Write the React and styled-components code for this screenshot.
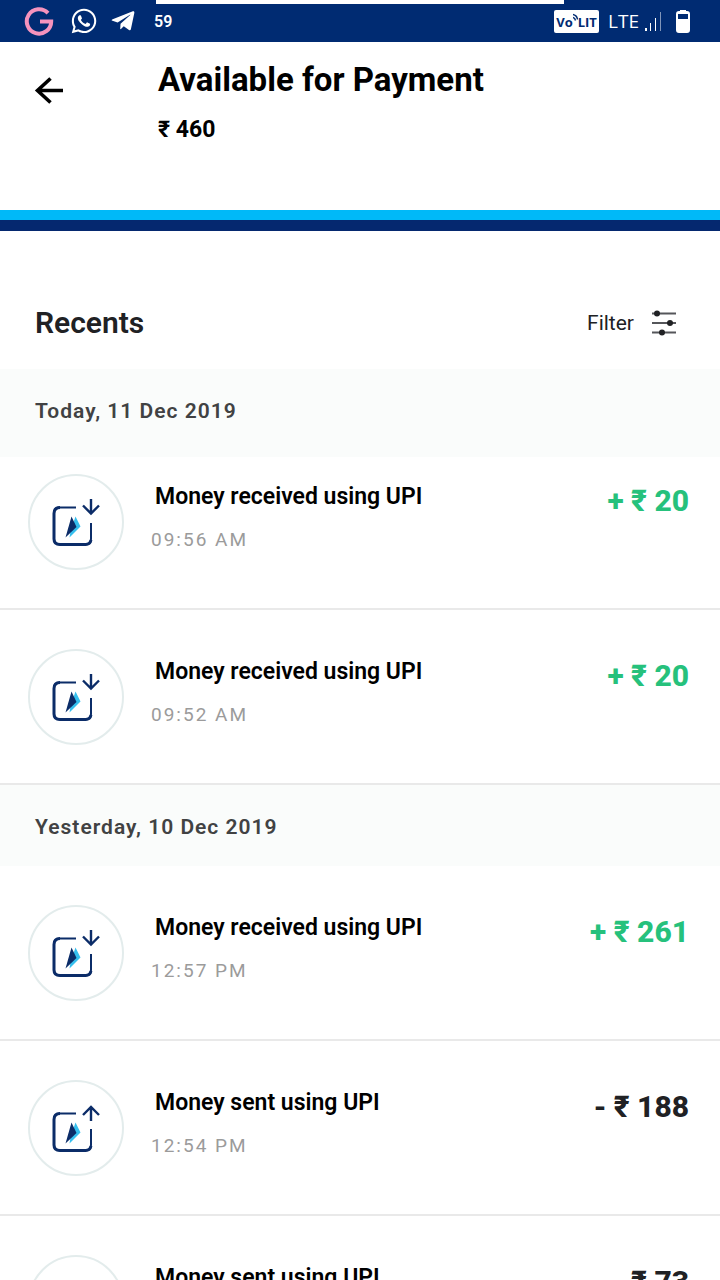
import React from 'react';
import styled, { createGlobalStyle } from 'styled-components';
import { FaWhatsapp, FaTelegramPlane } from 'react-icons/fa';

const GlobalStyle = createGlobalStyle`
  * {
    box-sizing: border-box;
  }
  body {
    margin: 0;
    background: #ffffff;
    font-family: Roboto, "Noto Sans", sans-serif;
    color: #202124;
  }
  h1, h2, h3, p, ul {
    margin: 0;
    padding: 0;
  }
`;

const Screen = styled.div`
  position: relative;
  height: 100vh;
  overflow: hidden;
`;

const StatusBar = styled.div`
  display: flex;
  align-items: center;
  justify-content: space-between;
  height: 42px;
  padding: 0 30px 0 24px;
  background: #002b72;
  color: #ffffff;
`;

const TopStrip = styled.div`
  position: absolute;
  top: 0;
  left: 156px;
  right: 156px;
  height: 4px;
  background: #ffffff;
`;

const StatusGroup = styled.div`
  display: flex;
  align-items: center;
  gap: ${(props) => props.$gap}px;
`;

const Count = styled.span`
  margin-left: 6px;
  font-size: 16px;
  font-weight: 600;
`;

const VolteBadge = styled.span`
  display: flex;
  justify-content: center;
  width: 45px;
  height: 23px;
  margin-right: 4px;
  border-radius: 2px;
  background: #ffffff;
  color: #002b72;
  font: 700 13px/24px "Open Sans", sans-serif;
`;

const Network = styled.span`
  font: 400 19px/24px "Open Sans", sans-serif;
`;

const Header = styled.header`
  display: flex;
  height: 168px;
  padding: 16px 32px;
`;

const BackButton = styled.button`
  display: flex;
  width: 126px;
  height: 64px;
  padding: 16px 0 0;
  border: none;
  background: transparent;
  cursor: pointer;
`;

const Title = styled.h1`
  color: #000000;
  font-size: 33px;
  font-weight: 700;
  line-height: 44px;
`;

const Balance = styled.p`
  margin-top: 14px;
  color: #000000;
  font-size: 23px;
  font-weight: 700;
  line-height: 28px;
`;

const Stripe = styled.div`
  height: 21px;
  border-top: 10px solid #00b9f8;
  background: #05286f;
`;

const RecentsBar = styled.div`
  display: flex;
  align-items: center;
  justify-content: space-between;
  height: 138px;
  padding: 45px 43px 0 35px;
`;

const RecentsTitle = styled.h2`
  font-size: 30px;
  font-weight: 600;
`;

const FilterButton = styled.button`
  display: flex;
  align-items: center;
  gap: 17px;
  padding: 0;
  border: none;
  background: transparent;
  color: #202124;
  font-family: inherit;
  font-size: 21px;
  cursor: pointer;
`;

const DateBand = styled.h3`
  height: ${(props) => (props.$tall ? 88 : 81)}px;
  padding-left: 35px;
  background: #fafcfb;
  color: #414243;
  font-size: 21px;
  font-weight: 600;
  letter-spacing: 1px;
  line-height: 84px;
`;

const List = styled.ul`
  list-style: none;
`;

const Row = styled.li`
  display: flex;
  height: ${(props) => (props.$compact ? 153 : 175)}px;
  padding: ${(props) => (props.$compact ? 17 : 39)}px 31px 0 28px;
  border-bottom: 2px solid #e9e9e9;
`;

const IconCircle = styled.div`
  display: flex;
  flex: none;
  width: 96px;
  height: 96px;
  border: 2px solid #e3ecec;
  border-radius: 50%;
`;

const Details = styled.div`
  flex: 1;
  padding: 9px 0 0 27px;
`;

const Name = styled.p`
  padding-left: 4px;
  color: #000000;
  font-size: 23px;
  font-weight: 600;
  line-height: 28px;
`;

const Time = styled.p`
  margin-top: 15px;
  color: #9b9b9b;
  font-size: 19px;
  letter-spacing: 2px;
  line-height: 28px;
`;

const Amount = styled.span`
  padding-top: 9px;
  color: ${(props) => (props.$sent ? '#202124' : '#26c17c')};
  font-size: 30px;
  font-weight: 800;
  line-height: 36px;
  white-space: nowrap;
`;

function GoogleIcon() {
  return (
    <svg width="34" height="30" viewBox="0 0 34 30" fill="none" stroke="#f593bd" strokeWidth="4">
      <path d="M24 7.200A12.200 12.200 0 1 0 27.200 15.500H16" />
    </svg>
  );
}

function CallWaves() {
  return (
    <svg width="5" height="14" viewBox="0 0 5 14" fill="none" stroke="#002b72" strokeWidth="1.500">
      <path d="M0 7.500Q2 8 2.500 10.500M0 4.500Q4 5.500 4.500 9.500" />
    </svg>
  );
}

function SignalIcon() {
  return (
    <svg width="18" height="20" viewBox="0 0 18 20" fill="#ffffff">
      <path d="M1 17h2v3H1zM6 12h1v8H6zM11 7h1v13h-1z" />
      <path d="M16 1h1v19h-1z" opacity="0.5" />
    </svg>
  );
}

function BatteryIcon() {
  return (
    <svg width="14" height="24" viewBox="0 0 14 24">
      <path
        d="M4 1h6v1h1q3 0 3 3v16q0 3-3 3H3q-3 0-3-3V5q0-3 3-3h1zM2 5v5h10V5z"
        fill="#ffffff"
        fillRule="evenodd"
      />
    </svg>
  );
}

function BackIcon() {
  return (
    <svg width="34" height="32" viewBox="0 0 34 32" fill="none" stroke="#000000" strokeWidth="3.600">
      <path d="M31 16.500H5M18.500 4.500L5.500 16.500L18.500 28.500" />
    </svg>
  );
}

function FilterIcon() {
  return (
    <svg width="26" height="26" viewBox="0 0 26 26">
      <path d="M1 3.500h24M1 13h24M1 22.500h24" stroke="#55565a" strokeWidth="2" />
      <circle cx="6" cy="3.500" r="3" fill="#202124" />
      <circle cx="19" cy="13" r="3" fill="#202124" />
      <circle cx="11" cy="22.500" r="3" fill="#202124" />
    </svg>
  );
}

function TransferIcon({ sent }) {
  return (
    <svg width="92" height="92" viewBox="2 2 92 92" fill="none" stroke="#0b2c68">
      <path d="M48 33.500H32Q26.500 33.500 26 39V65Q26.500 70.500 32 70.500H57.500Q63 70.500 63 65V49" strokeWidth="2" />
      <path d="M32 33.500Q26 33.500 26 39.500V65Q26 70.500 32 70.500H57.500Q62 70.500 63 66" strokeWidth="3" />
      <path d="M47.500 42.500L52.500 52.500L41.500 63.500L42.500 57Z" fill="#35bfee" stroke="none" />
      <path d="M43.500 42.500L48.500 53L37.500 63.500Z" fill="#0b2c68" stroke="none" />
      <path
        d={sent ? 'M63 41V27M55 35L63 27L71 35' : 'M63 25V39M55 31.500L63 39.500L71 31.500'}
        strokeWidth="2.400"
      />
    </svg>
  );
}

const days = [
  {
    label: 'Today, 11 Dec 2019',
    items: [
      { time: '09:56 AM', amount: '₹ 20' },
      { time: '09:52 AM', amount: '₹ 20' },
    ],
  },
  {
    label: 'Yesterday, 10 Dec 2019',
    items: [
      { time: '12:57 PM', amount: '₹ 261' },
      { time: '12:54 PM', amount: '₹ 188', sent: true },
      { time: '12:50 PM', amount: '₹ 73', sent: true },
    ],
  },
];

export default function App() {
  return (
    <Screen>
      <GlobalStyle />
      <StatusBar>
        <StatusGroup $gap={12}>
          <GoogleIcon />
          <FaWhatsapp size={28} />
          <FaTelegramPlane size={26} />
          <Count>59</Count>
        </StatusGroup>
        <StatusGroup $gap={14}>
          <StatusGroup $gap={5}>
            <VolteBadge>
              Vo
              <CallWaves />
              LIT
            </VolteBadge>
            <Network>LTE</Network>
            <SignalIcon />
          </StatusGroup>
          <BatteryIcon />
        </StatusGroup>
      </StatusBar>
      <TopStrip />
      <Header>
        <BackButton aria-label="Back">
          <BackIcon />
        </BackButton>
        <div>
          <Title>Available for Payment</Title>
          <Balance>₹ 460</Balance>
        </div>
      </Header>
      <Stripe />
      <RecentsBar>
        <RecentsTitle>Recents</RecentsTitle>
        <FilterButton>
          Filter
          <FilterIcon />
        </FilterButton>
      </RecentsBar>
      {days.map((day, dayIndex) => (
        <section key={day.label}>
          <DateBand $tall={dayIndex === 0}>{day.label}</DateBand>
          <List>
            {day.items.map((item, index) => (
              <Row key={item.time} $compact={dayIndex === 0 && index === 0}>
                <IconCircle>
                  <TransferIcon sent={item.sent} />
                </IconCircle>
                <Details>
                  <Name>Money {item.sent ? 'sent' : 'received'} using UPI</Name>
                  <Time>{item.time}</Time>
                </Details>
                <Amount $sent={item.sent}>
                  {item.sent ? '-' : '+'} {item.amount}
                </Amount>
              </Row>
            ))}
          </List>
        </section>
      ))}
    </Screen>
  );
}
